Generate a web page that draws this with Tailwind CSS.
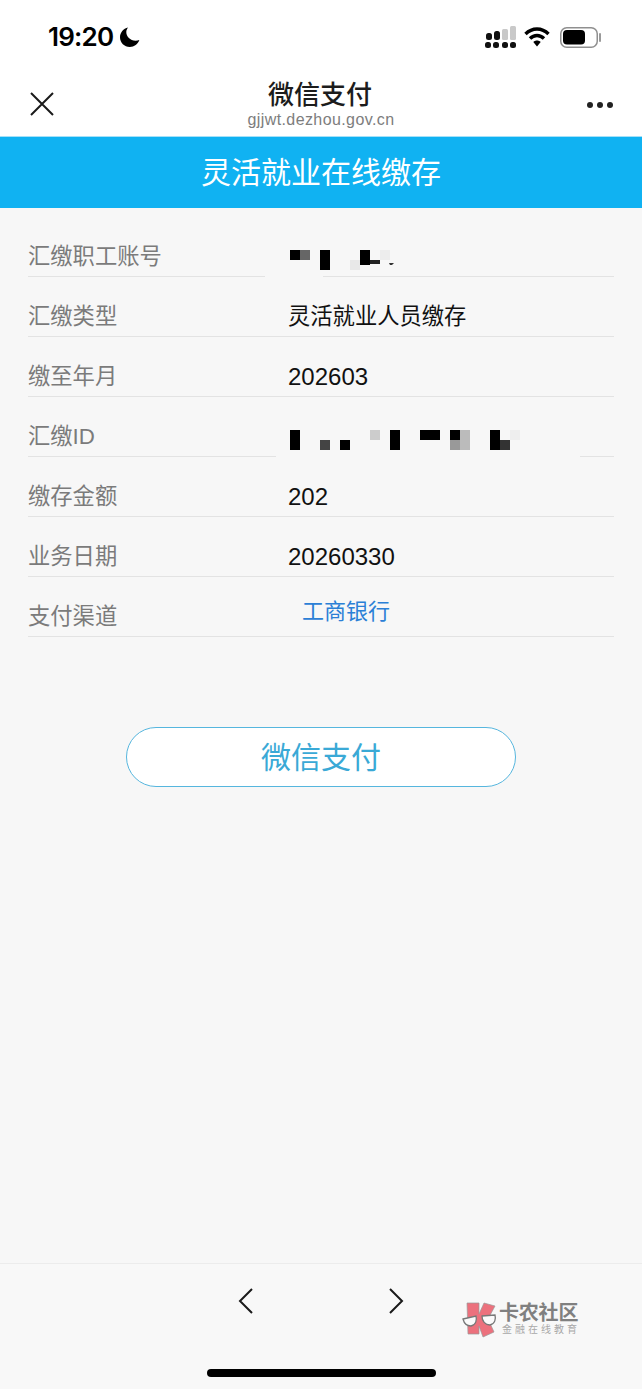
<!DOCTYPE html>
<html lang="zh-CN">

<head>
    <meta charset="UTF-8">
    <meta name="viewport" content="width=device-width, initial-scale=1.0">
    <title>微信支付</title>
    <script src="https://cdn.jsdelivr.net/npm/@tailwindcss/browser@4"></script>
</head>

<body class="bg-[#f7f7f7] font-['Liberation_Sans','Noto_Sans_CJK_SC',sans-serif]">
    <div class="relative flex flex-col w-[642px] h-[1389px] overflow-hidden">

        <!-- Status bar -->
        <div class="flex items-center h-[74px] bg-white pl-[48px] pr-[40px]">
            <span class="font-['Inter',sans-serif] font-semibold text-[26px] leading-none text-black tracking-[-0.8px]">19:20</span>
            <svg class="ml-[7px]" width="20" height="20" viewBox="0 0 21 21">
                <path d="M8.5 0.5C3.5 1.6 0 5.8 0 10.8 0 16.5 4.6 21 10.3 21c4.6 0 8.6-3 10-7.300-1.200 0.500-2.500 0.700-3.900 0.700C10.600 14.400 6.600 9.900 6.600 5.300c0-1.800 0.700-3.400 1.900-4.800z" fill="#000" />
            </svg>
            <svg class="ml-auto" width="32" height="22" viewBox="0 0 32 22">
                <rect x="2" y="7" width="6" height="7" rx="2.500" fill="#111" />
                <rect x="10" y="5" width="6" height="9" rx="2.500" fill="#111" />
                <rect x="18" y="3" width="6" height="11" rx="1.500" fill="#c9c9c9" />
                <rect x="26" y="0" width="6" height="14" rx="1.500" fill="#c9c9c9" />
                <rect x="1" y="16" width="6" height="6" rx="2.500" fill="#111" />
                <rect x="9" y="16" width="6" height="6" rx="2.500" fill="#111" />
                <rect x="18" y="16" width="6" height="6" rx="2.500" fill="#111" />
                <rect x="26" y="16" width="6" height="6" rx="2.500" fill="#111" />
            </svg>
            <svg class="ml-[8px]" width="26" height="20" viewBox="0 0 26 20">
                <path d="M1.500 7C4.700 3.800 8.700 2 13 2s8.300 1.800 11.500 5" fill="none" stroke="#000" stroke-width="3.400" />
                <path d="M6 11.500c1.900-1.900 4.300-3 7-3s5.100 1.100 7 3" fill="none" stroke="#000" stroke-width="3.400" />
                <path d="M9.300 15c1-1 2.300-1.500 3.700-1.500s2.700 0.500 3.700 1.500L13 19.500z" fill="#000" />
            </svg>
            <svg class="ml-[10px]" width="42" height="21" viewBox="0 0 42 21">
                <rect x="0.750" y="0.750" width="36.500" height="19.500" rx="6" fill="#fff" stroke="#8f8f8f" stroke-width="1.500" />
                <rect x="3" y="3" width="22" height="14.500" rx="4" fill="#000" />
                <rect x="39" y="6" width="2" height="9" rx="1" fill="#9a9a9a" />
            </svg>
        </div>

        <!-- WeChat title bar -->
        <div class="grid grid-cols-[1fr_auto_1fr] items-center h-[62px] bg-white px-[29px]">
            <svg class="-mt-[2px]" width="26" height="26" viewBox="0 0 26 26">
                <path d="M2 2L24 24M24 2L2 24" fill="none" stroke="#1a1a1a" stroke-width="2" />
            </svg>
            <div class="flex flex-col items-center -mt-[2px]">
                <span class="text-[26px] leading-[32px] font-medium text-[#1c1c1c] -ml-[2px]">微信支付</span>
                <span class="text-[16px] leading-[18px] text-[#7d7d7d] tracking-[0.4px]">gjjwt.dezhou.gov.cn</span>
            </div>
            <div class="flex justify-end gap-[4px]">
                <span class="w-[6px] h-[6px] rounded-full bg-[#222]"></span>
                <span class="w-[6px] h-[6px] rounded-full bg-[#222]"></span>
                <span class="w-[6px] h-[6px] rounded-full bg-[#222]"></span>
            </div>
        </div>

        <!-- Page heading -->
        <div class="flex items-center justify-center h-[72px] bg-[#10b2f2] border-t border-[#a5e0f8] text-white text-[30px]">灵活就业在线缴存</div>

        <!-- Details -->
        <div class="flex flex-col pt-[9px] px-[28px]">
            <div class="flex items-end h-[59px] pb-[5px] text-[22.3px] leading-[28px]">
                <span class="w-[260px] text-[#7b7b7b]">汇缴职工账号</span>
                <svg class="ml-[2px] mb-[1px]" width="110" height="20" viewBox="290 250 110 20">
                    <rect x="290" y="250" width="10" height="10" fill="#000" />
                    <rect x="300" y="250" width="10" height="10" fill="#666" />
                    <rect x="320" y="250" width="10" height="20" fill="#000" />
                    <rect x="350" y="260" width="10" height="10" fill="#e8e8e8" />
                    <rect x="380" y="250" width="10" height="10" fill="#ededed" />
                    <rect x="360" y="250" width="10" height="15" fill="#000" />
                    <rect x="370" y="260" width="10" height="4" fill="#222" />
                    <path d="M389 263h5l-2 2h-2z" fill="#333" />
                </svg>
            </div>
            <div class="flex h-px">
                <div class="w-[237px] bg-[#e3e3e3]"></div>
                <div class="ml-auto w-[291px] bg-[#e3e3e3]"></div>
            </div>

            <div class="flex items-end h-[59px] pb-[5px] text-[22.3px] leading-[28px]">
                <span class="w-[260px] text-[#7b7b7b]">汇缴类型</span>
                <span class="text-[#111]">灵活就业人员缴存</span>
            </div>
            <div class="h-px bg-[#e3e3e3]"></div>

            <div class="flex items-end h-[59px] pb-[5px] text-[22.3px] leading-[28px]">
                <span class="w-[260px] text-[#7b7b7b]">缴至年月</span>
                <span class="text-[24px] text-[#111]">202603</span>
            </div>
            <div class="h-px bg-[#e3e3e3]"></div>

            <div class="flex items-end h-[59px] pb-[5px] text-[22.3px] leading-[28px]">
                <span class="w-[260px] text-[#7b7b7b]">汇缴ID</span>
                <svg class="ml-[2px] mb-[1px]" width="230" height="20" viewBox="290 430 230 20">
                    <rect x="290" y="430" width="10" height="20" fill="#000" />
                    <rect x="320" y="440" width="10" height="10" fill="#444" />
                    <rect x="340" y="440" width="10" height="10" fill="#000" />
                    <rect x="370" y="430" width="10" height="10" fill="#ccc" />
                    <rect x="390" y="430" width="10" height="20" fill="#000" />
                    <rect x="420" y="430" width="20" height="10" fill="#000" />
                    <rect x="450" y="430" width="10" height="10" fill="#000" />
                    <rect x="450" y="440" width="10" height="10" fill="#999" />
                    <rect x="460" y="430" width="10" height="20" fill="#bbb" />
                    <rect x="490" y="430" width="10" height="20" fill="#000" />
                    <rect x="500" y="440" width="10" height="10" fill="#333" />
                    <rect x="510" y="430" width="10" height="10" fill="#eee" />
                </svg>
            </div>
            <div class="flex h-px">
                <div class="w-[248px] bg-[#e3e3e3]"></div>
                <div class="ml-auto w-[34px] bg-[#e3e3e3]"></div>
            </div>

            <div class="flex items-end h-[59px] pb-[5px] text-[22.3px] leading-[28px]">
                <span class="w-[260px] text-[#7b7b7b]">缴存金额</span>
                <span class="text-[24px] text-[#111]">202</span>
            </div>
            <div class="h-px bg-[#e3e3e3]"></div>

            <div class="flex items-end h-[59px] pb-[5px] text-[22.3px] leading-[28px]">
                <span class="w-[260px] text-[#7b7b7b]">业务日期</span>
                <span class="text-[24px] text-[#111]">20260330</span>
            </div>
            <div class="h-px bg-[#e3e3e3]"></div>

            <div class="flex items-end h-[59px] pb-[5px] text-[22.3px] leading-[28px]">
                <span class="w-[260px] text-[#7b7b7b]">支付渠道</span>
                <span class="ml-[14px] mb-[5px] text-[22px] text-[#2b80d6]">工商银行</span>
            </div>
            <div class="h-px bg-[#e3e3e3]"></div>
        </div>

        <!-- Pay button -->
        <button class="self-center mt-[90px] w-[390px] h-[60px] rounded-full bg-white border border-[#56b6de] text-[#3aa9d6] text-[30px]">微信支付</button>

        <!-- Bottom nav -->
        <div class="mt-auto flex h-[126px] bg-[#f8f8f8] border-t border-[#ececec] pl-[238px] pt-[24px] gap-[136px]">
            <svg class="shrink-0" width="15" height="26" viewBox="0 0 15 26">
                <path d="M14 1L2 13l12 12" fill="none" stroke="#1a1a1a" stroke-width="2" />
            </svg>
            <svg class="shrink-0" width="15" height="26" viewBox="0 0 15 26">
                <path d="M1 1l12 12L1 25" fill="none" stroke="#1a1a1a" stroke-width="2" />
            </svg>
        </div>

        <!-- Watermark -->
        <div class="absolute left-[462px] top-[1302px] flex items-start">
            <svg width="36" height="36" viewBox="0 0 36 36">
                <path d="M5 1h12v11l5-11 11 3-7 13 6 13-11 5-4-11v8H6z" fill="#ec717d" stroke="#999" stroke-width="0.700" />
                <path d="M1 17l13-3c1 4 0 9-5 10-5 0-7-3-8-7zM20 14l13-1c1 4 0 9-5 10-5 0-8-4-8-9z" fill="#fafafa" stroke="#777" stroke-width="1.300" />
            </svg>
            <div class="flex flex-col ml-[1px] text-[#808080]">
                <span class="text-[20px] leading-[22px] font-bold tracking-[-0.200px]">卡农社区</span>
                <span class="ml-[3px] text-[10px] leading-[12px] tracking-[3px] text-[#a8a8a8]">金融在线教育</span>
            </div>
        </div>

        <!-- Home indicator -->
        <div class="absolute left-[207px] top-[1369px] w-[229px] h-[8px] rounded-full bg-black"></div>
    </div>
</body>

</html>
